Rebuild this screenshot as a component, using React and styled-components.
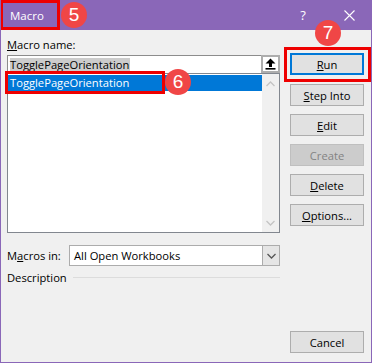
import React from "react";
import styled, { createGlobalStyle } from "styled-components";

const Global = createGlobalStyle`
  html, body { margin: 0; padding: 0; background: #f0f0f0; }
  body { font-family: "Open Sans", "Noto Sans", sans-serif; font-size: 11.2px; color: #000; }
  * { box-sizing: border-box; }
`;

const PURPLE = "#8a67b8";

const Window = styled.div`
  position: relative;
  width: 372px;
  height: 363px;
  display: flex;
  flex-direction: column;
  background: #f0f0f0;
  border: 1px solid ${PURPLE};
  border-top: none;
  overflow: hidden;
`;

const TitleBar = styled.div`
  height: 30px;
  margin: 0 -1px;
  background: ${PURPLE};
  display: flex;
  align-items: center;
  padding-left: 10px;
  color: #fff;
  font-size: 11.5px;
`;

const TitleText = styled.span`
  flex: 1;
`;

const TitleButton = styled.div`
  width: ${(p) => p.$w}px;
  height: 30px;
  display: flex;
  align-items: center;
  justify-content: center;
  color: #fff;
  font-size: 13px;
`;

const Content = styled.div`
  flex: 1;
  display: flex;
  gap: 10px;
  padding: 7px 7px 9px 6px;
`;

const LeftCol = styled.div`
  width: 273px;
  display: flex;
  flex-direction: column;
`;

const Label = styled.div`
  line-height: 16px;
  height: 16px;
  white-space: nowrap;
`;

const InputRow = styled.div`
  display: flex;
  height: 18px;
  margin-top: 2px;
`;

const TextInput = styled.div`
  flex: 1;
  background: #fff;
  border: 1px solid #8c8c8c;
  border-bottom: none;
  border-right: none;
  padding: 2px 0 0 2px;
  line-height: 13px;
`;

const SelText = styled.span`
  background: #cccccc;
  display: inline-block;
  line-height: 13px;
  height: 13px;
  padding-right: 1px;
`;

const ArrowButton = styled.div`
  width: 19px;
  height: 18px;
  background: #fff;
  border: 2px solid #adadad;
  display: flex;
  align-items: center;
  justify-content: center;
`;

const List = styled.div`
  height: 160px;
  display: flex;
  background: #fff;
  border: 1px solid #82878f;
`;

const ListItems = styled.div`
  flex: 1;
  padding-top: 1px;
`;

const ListItem = styled.div`
  height: 16px;
  line-height: 16px;
  padding-left: 2px;
  background: ${(p) => (p.$selected ? "#0078d7" : "transparent")};
  color: ${(p) => (p.$selected ? "#fff" : "#000")};
`;

const ScrollBar = styled.div`
  width: 17px;
  background: #f0f0f0;
  display: flex;
  flex-direction: column;
  justify-content: space-between;
  align-items: center;
  padding: 7px 0 6px;
`;

const MacrosRow = styled.div`
  display: flex;
  align-items: center;
  height: 21px;
  margin-top: 12px;
`;

const RowLabel = styled.div`
  width: 62px;
  white-space: nowrap;
`;

const Select = styled.div`
  flex: 1;
  height: 21px;
  display: flex;
  background: #fff;
  border: 1px solid #acacac;
`;

const SelectValue = styled.div`
  flex: 1;
  padding-left: 4px;
  line-height: 19px;
`;

const SelectButton = styled.div`
  width: 17px;
  background: #e5e5e5;
  border-left: 1px solid #acacac;
  display: flex;
  align-items: center;
  justify-content: center;
`;

const DescRow = styled.div`
  display: flex;
  align-items: center;
  gap: 6px;
  margin-top: 3px;
  height: 16px;
`;

const Rule = styled.div`
  flex: 1;
  height: 1px;
  background: #dcdcdc;
`;

const RightCol = styled.div`
  width: 74px;
  display: flex;
  flex-direction: column;
  padding-top: 16px;
`;

const Button = styled.div`
  height: 22px;
  display: flex;
  align-items: center;
  justify-content: center;
  border: ${(p) => (p.$default ? "2px solid #0078d7" : p.$disabled ? "1px solid #bfbfbf" : "1px solid #adadad")};
  color: ${(p) => (p.$disabled ? "#838383" : "#000")};
  background: ${(p) => (p.$disabled ? "#cccccc" : "#e1e1e1")};
  margin-bottom: ${(p) => p.$mb ?? 8}px;
  margin-top: ${(p) => (p.$bottom ? "auto" : "0")};
  white-space: nowrap;
`;

const U = styled.span`
  text-decoration: underline;
  text-underline-offset: 1px;
`;

const RedBox = styled.div`
  position: absolute;
  border: 3px solid #ee0000;
  pointer-events: none;
`;

const Badge = styled.div`
  position: absolute;
  width: 26px;
  height: 26px;
  border-radius: 50%;
  background: #f04646;
  color: #fff;
  font-family: "Liberation Sans", Arial, sans-serif;
  font-size: 19px;
  display: flex;
  align-items: center;
  justify-content: center;
`;

const Chevron = ({ up, color = "#c4c4c4" }) => (
  <svg width="9" height="6" viewBox="0 0 9 6">
    <polyline
      points={up ? "0.5,5 4.5,1 8.5,5" : "0.5,1 4.5,5 8.5,1"}
      fill="none"
      stroke={color}
      strokeWidth="1.3"
    />
  </svg>
);

export default function App() {
  return (
    <>
      <Global />
      <Window>
        <TitleBar>
          <TitleText>Macro</TitleText>
          <TitleButton $w={48}>?</TitleButton>
          <TitleButton $w={45}>
            <svg width="11" height="11" viewBox="0 0 11 11">
              <path d="M0.5 0.5 L10.5 10.5 M10.5 0.5 L0.5 10.5" stroke="#fff" strokeWidth="1.1" />
            </svg>
          </TitleButton>
        </TitleBar>
        <Content>
          <LeftCol>
            <Label>
              <U>M</U>acro name:
            </Label>
            <InputRow>
              <TextInput>
                <SelText>TogglePageOrientation</SelText>
              </TextInput>
              <ArrowButton>
                <svg width="11" height="12" viewBox="0 0 11 12">
                  <path d="M5.5 0.5 L10.5 5.5 L7 5.5 L7 9 L4 9 L4 5.5 L0.5 5.5 Z" fill="#000" />
                  <rect x="0.5" y="10" width="10" height="1.6" fill="#000" />
                </svg>
              </ArrowButton>
            </InputRow>
            <List>
              <ListItems>
                <ListItem $selected>TogglePageOrientation</ListItem>
              </ListItems>
              <ScrollBar>
                <Chevron up />
                <Chevron />
              </ScrollBar>
            </List>
            <MacrosRow>
              <RowLabel>
                M<U>a</U>cros in:
              </RowLabel>
              <Select>
                <SelectValue>All Open Workbooks</SelectValue>
                <SelectButton>
                  <Chevron color="#555" />
                </SelectButton>
              </Select>
            </MacrosRow>
            <DescRow>
              <span>Description</span>
              <Rule />
            </DescRow>
          </LeftCol>
          <RightCol>
            <Button $default $mb={9}>
              <U>R</U>un
            </Button>
            <Button>
              <U>S</U>tep Into
            </Button>
            <Button>
              <U>E</U>dit
            </Button>
            <Button $disabled>Create</Button>
            <Button>
              <U>D</U>elete
            </Button>
            <Button>
              <U>O</U>ptions...
            </Button>
            <Button $bottom $mb={0}>
              Cancel
            </Button>
          </RightCol>
        </Content>

        <RedBox style={{ left: -1, top: 0, width: 60, height: 30 }} />
        <Badge style={{ left: 60, top: 2 }}>5</Badge>
        <RedBox style={{ left: 4, top: 71, width: 160, height: 23 }} />
        <Badge style={{ left: 164, top: 69 }}>6</Badge>
        <RedBox style={{ left: 283, top: 47, width: 87, height: 35 }} />
        <Badge style={{ left: 314, top: 20 }}>7</Badge>
      </Window>
    </>
  );
}
